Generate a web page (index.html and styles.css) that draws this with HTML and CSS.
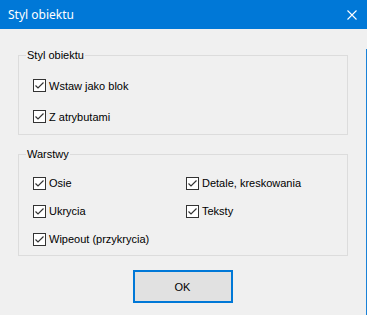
FILE: index.html
```html
<!DOCTYPE html>
<html lang="pl">
<head>
<meta charset="utf-8">
<title>Styl obiektu</title>
<link rel="stylesheet" href="styles.css">
</head>
<body>
<div class="window">
  <div class="titlebar">
    <span class="title">Styl obiektu</span>
    <span class="close">
      <svg width="10" height="10" viewBox="0 0 10 10"><path d="M0.5 0.5L9.5 9.5M9.5 0.5L0.5 9.5" stroke="#fff" stroke-width="1.1" fill="none"/></svg>
    </span>
  </div>
  <div class="content">
    <fieldset class="group g1">
      <legend>Styl obiektu</legend>
      <div class="row"><span class="cb"><svg width="11" height="11" viewBox="0 0 11 11"><path d="M1.5 5.5L4 8L9.5 2.5" stroke="#333" stroke-width="1.2" fill="none"/></svg></span><span>Wstaw jako blok</span></div>
      <div class="row"><span class="cb"><svg width="11" height="11" viewBox="0 0 11 11"><path d="M1.5 5.5L4 8L9.5 2.5" stroke="#333" stroke-width="1.2" fill="none"/></svg></span><span>Z atrybutami</span></div>
    </fieldset>
    <fieldset class="group g2">
      <legend>Warstwy</legend>
      <div class="grid">
        <div class="row"><span class="cb"><svg width="11" height="11" viewBox="0 0 11 11"><path d="M1.5 5.5L4 8L9.5 2.5" stroke="#333" stroke-width="1.2" fill="none"/></svg></span><span>Osie</span></div>
        <div class="row"><span class="cb"><svg width="11" height="11" viewBox="0 0 11 11"><path d="M1.5 5.5L4 8L9.5 2.5" stroke="#333" stroke-width="1.2" fill="none"/></svg></span><span>Detale, kreskowania</span></div>
        <div class="row"><span class="cb"><svg width="11" height="11" viewBox="0 0 11 11"><path d="M1.5 5.5L4 8L9.5 2.5" stroke="#333" stroke-width="1.2" fill="none"/></svg></span><span>Ukrycia</span></div>
        <div class="row"><span class="cb"><svg width="11" height="11" viewBox="0 0 11 11"><path d="M1.5 5.5L4 8L9.5 2.5" stroke="#333" stroke-width="1.2" fill="none"/></svg></span><span>Teksty</span></div>
        <div class="row"><span class="cb"><svg width="11" height="11" viewBox="0 0 11 11"><path d="M1.5 5.5L4 8L9.5 2.5" stroke="#333" stroke-width="1.2" fill="none"/></svg></span><span>Wipeout (przykrycia)</span></div>
      </div>
    </fieldset>
    <div class="buttons">
      <button class="ok">OK</button>
    </div>
  </div>
</div>
</body>
</html>
```
FILE: styles.css
```css
html, body {
  margin: 0;
  padding: 0;
  background: #f0f0f0;
}
.window {
  width: 367px;
  height: 315px;
  overflow: hidden;
  font-family: "Liberation Sans", Arial, sans-serif;
  font-size: 11px;
  color: #000;
}
.titlebar {
  height: 29px;
  background: #0078d7;
  display: flex;
  align-items: center;
  justify-content: space-between;
  padding: 0 10px 0 8px;
}
.title {
  font-family: "Noto Sans", "Open Sans", sans-serif;
  font-size: 12px;
  color: #fff;
  margin-top: -1px;
}
.close {
  display: flex;
  width: 10px;
  height: 10px;
  margin-right: 0;
}
.content {
  height: 286px;
  width: 330px;
  padding: 0 18px;
  border-right: 1px solid #1a82d8;
  background: #f0f0f0;
}
.group {
  margin: 0;
  border: 1px solid #dcdcdc;
  padding: 0 0 0 14px;
  min-width: 0;
}
.group legend {
  padding: 0 1px;
  margin-left: -7px;
  line-height: 13px;
}
.g1 {
  margin-top: 20px;
  padding-top: 8px;
  padding-bottom: 2px;
}
.g2 {
  margin-top: 13px;
  padding-top: 8px;
  padding-bottom: 2px;
}
.g1 .row {
  height: 31px;
}
.g2 .row {
  height: 28px;
}
.grid {
  display: grid;
  grid-template-columns: 153px 1fr;
}
.row {
  display: flex;
  align-items: center;
  gap: 3px;
  white-space: nowrap;
}
.cb {
  width: 11px;
  height: 11px;
  border: 1px solid #333;
  background: #fff;
  display: flex;
  flex: none;
}
.buttons {
  display: flex;
  justify-content: center;
  margin-top: 14px;
}
.ok {
  width: 100px;
  height: 33px;
  border: 2px solid #0078d7;
  background: #e1e1e1;
  font-family: "Liberation Sans", Arial, sans-serif;
  font-size: 11px;
  color: #000;
  padding: 0;
  margin-left: -1px;
}
```
